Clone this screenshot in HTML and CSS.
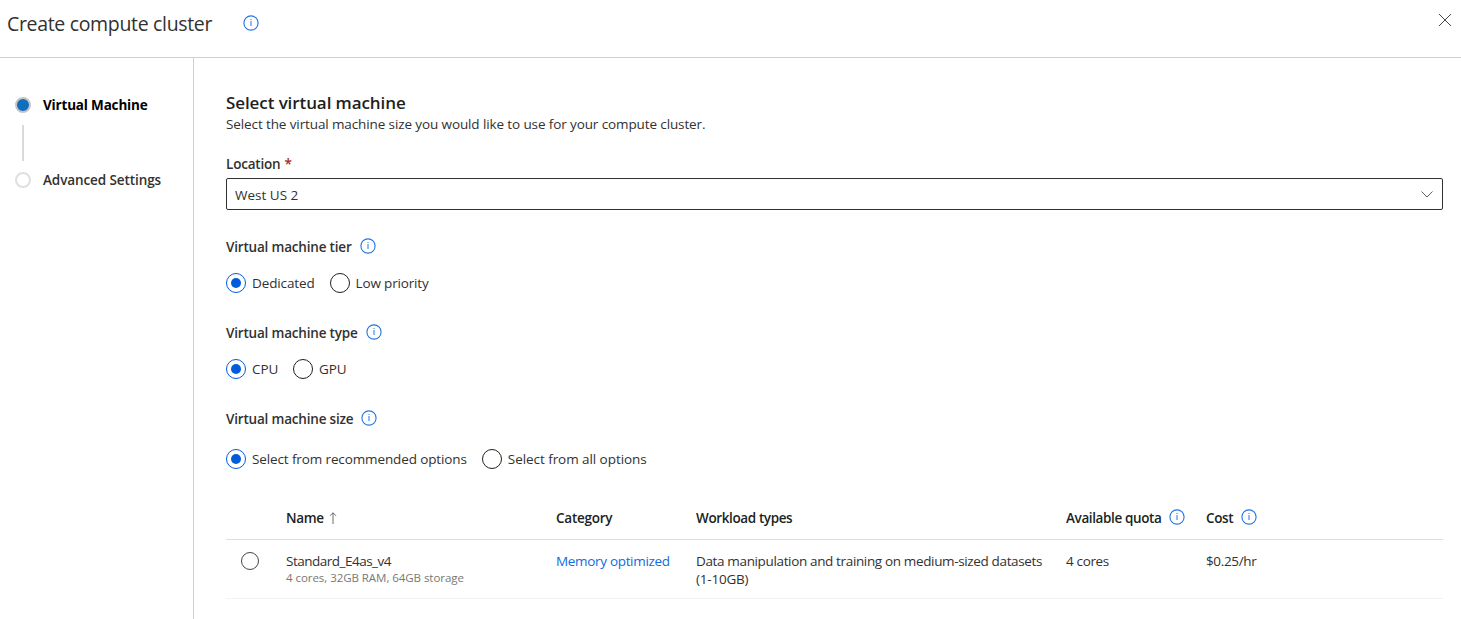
FILE: index.html
```html
<!DOCTYPE html>
<html lang="en">
<head>
<meta charset="utf-8">
<title>Create compute cluster</title>
<link rel="stylesheet" href="styles.css">
</head>
<body>
<svg class="defs" width="0" height="0" aria-hidden="true">
  <symbol id="info" viewBox="0 0 16 16">
    <circle cx="8" cy="8" r="7.1" fill="none" stroke="currentColor" stroke-width="1.1"/>
    <path d="M7.5 4h1v1h-1zM7.5 6h1v5h-1z" fill="currentColor"/>
  </symbol>
</svg>
<header class="header">
  <h1 class="title">Create compute cluster</h1>
  <svg class="info"><use href="#info"/></svg>
  <svg class="close" viewBox="0 0 14 14"><path d="M1 1l12 12M13 1L1 13"/></svg>
</header>
<div class="body">
  <nav class="steps">
    <div class="step active"><span class="dot"></span><span class="step-text">Virtual Machine</span></div>
    <div class="line"></div>
    <div class="step"><span class="dot"></span><span class="step-text">Advanced Settings</span></div>
  </nav>
  <main class="main">
    <h2 class="heading">Select virtual machine</h2>
    <p class="sub">Select the virtual machine size you would like to use for your compute cluster.</p>
    <div class="label location"><span>Location</span><span class="required">*</span></div>
    <div class="select"><span class="value">West US 2</span><svg class="chevron" viewBox="0 0 12 7"><path d="M.5.5L6 6 11.5.5"/></svg></div>

    <div class="label"><span class="tier">Virtual machine tier</span><svg class="info"><use href="#info"/></svg></div>
    <div class="radios">
      <span class="radio on"></span><span class="option dedicated">Dedicated</span>
      <span class="radio"></span><span class="option low">Low priority</span>
    </div>

    <div class="label"><span class="type">Virtual machine type</span><svg class="info"><use href="#info"/></svg></div>
    <div class="radios">
      <span class="radio on"></span><span class="option cpu">CPU</span>
      <span class="radio"></span><span class="option gpu">GPU</span>
    </div>

    <div class="label"><span class="size">Virtual machine size</span><svg class="info"><use href="#info"/></svg></div>
    <div class="radios sizes">
      <span class="radio on"></span><span class="option recommended">Select from recommended options</span>
      <span class="radio"></span><span class="option all">Select from all options</span>
    </div>

    <div class="table">
      <div class="row head">
        <span></span>
        <span class="cell"><span class="name">Name</span><svg class="arrow" viewBox="0 0 8 12"><path d="M4 .8V12M1 3.8l3-3 3 3"/></svg></span>
        <span class="cell"><span class="category">Category</span></span>
        <span class="cell"><span class="workload">Workload types</span></span>
        <span class="cell"><span class="quota">Available quota</span><svg class="info"><use href="#info"/></svg></span>
        <span class="cell"><span class="cost">Cost</span><svg class="info"><use href="#info"/></svg></span>
      </div>
      <div class="row item">
        <span class="pick"></span>
        <div><div class="sku">Standard_E4as_v4</div><div class="spec">4 cores, 32GB RAM, 64GB storage</div></div>
        <a class="link">Memory optimized</a>
        <div><div class="desc">Data manipulation and training on medium-sized datasets</div><div class="range">(1-10GB)</div></div>
        <span class="cores">4 cores</span>
        <span class="price">$0.25/hr</span>
      </div>
    </div>
  </main>
</div>
</body>
</html>
```
FILE: styles.css
```css
* { box-sizing: border-box; }
body { margin: 0; height: 619px; overflow: hidden; background: #fff; color: #323130; font: 13.5px/20px "Open Sans", "Noto Sans", sans-serif; white-space: nowrap; display: flex; flex-direction: column; }
h1, h2, p { margin: 0; }
.defs { display: none; }
.info { width: 16px; height: 16px; color: #2476e3; flex: none; }
.header { height: 58px; flex: none; border-bottom: 1px solid #d2d0ce; display: flex; align-items: flex-start; padding: 10px 9px 0 7px; }
.title { font-size: 19.5px; line-height: 28px; font-weight: 400; width: 236px; letter-spacing: -.33px; }
.header .info { margin-top: 4.5px; }
.close { width: 14px; height: 14px; margin: 3px 0 0 auto; fill: none; stroke: #484644; stroke-width: 1; }
.body { flex: 1; display: flex; min-height: 0; }
.steps { width: 194px; flex: none; border-right: 1px solid #d2d0ce; padding: 37px 0 0 15px; }
.step { display: flex; align-items: center; gap: 12px; height: 20px; font-weight: 600; letter-spacing: -.09px; }
.active { font-weight: 700; color: #000; letter-spacing: -.18px; }
.dot { width: 16px; height: 16px; border-radius: 50%; border: 2px solid #e1dfdd; }
.active .dot { border: 2px solid #c8c6c4; background: #106ebe; }
.line { width: 2px; height: 36px; margin: 10px 0 9px 7px; background: #dcdad8; }
.main { flex: 1; padding: 33px 18px 0 32px; }
.heading { font-size: 17px; line-height: 23px; font-weight: 600; color: #201f1e; letter-spacing: -.09px; }
.sub { margin-bottom: 20px; letter-spacing: -.112px; }
.label { display: flex; gap: 8px; height: 20px; font-weight: 600; letter-spacing: -.19px; }
.label .info { margin-top: .5px; }
.location { gap: 4px; margin-bottom: 4px; }
.required { color: #a4262c; }
.select { height: 32px; border: 1px solid #323130; border-radius: 2px; display: flex; align-items: center; justify-content: space-between; padding: 1px 9px 0 8px; margin-bottom: 27px; }
.chevron { width: 12px; height: 7px; fill: none; stroke: #605e5c; stroke-width: 1; }
.radios { display: flex; align-items: center; height: 20px; margin: 16px 0 30px; }
.sizes { margin: 20px 0 28px; }
.radio { width: 20px; height: 20px; border: 1px solid #201f1e; border-radius: 50%; display: grid; place-items: center; margin-right: 6px; }
.on { border-color: #015cda; }
.on::after { content: ""; width: 10px; height: 10px; border-radius: 50%; background: #015cda; }
.option { margin-right: 15px; letter-spacing: -.12px; }
.all { letter-spacing: -.06px; }
.low { letter-spacing: -.17px; }
.row { display: grid; grid-template-columns: 60px 270px 140px 370px 140px 1fr; }
.head { height: 43px; border-bottom: 1px solid #e1dfdd; padding-top: 11px; font-weight: 600; color: #201f1e; letter-spacing: -.38px; }
.category { letter-spacing: -.25px; }
.cell { display: flex; gap: 7.5px; }
.cell .info { margin-top: .5px; }
.arrow { width: 8px; height: 12px; margin: 4px 0 0 -2px; fill: none; stroke: #605e5c; stroke-width: .9; }
.item { height: 59px; border-bottom: 1px solid #f3f2f1; padding-top: 12px; line-height: 18px; letter-spacing: -.355px; }
.pick { width: 18px; height: 18px; border: 1px solid #484644; border-radius: 50%; margin-left: 15px; }
.sku { letter-spacing: -.5px; }
.spec { font-size: 11.5px; line-height: 16px; color: #797775; letter-spacing: -.05px; }
.range { letter-spacing: -.2px; }
.link { color: #0f6be0; letter-spacing: -.32px; }
```
